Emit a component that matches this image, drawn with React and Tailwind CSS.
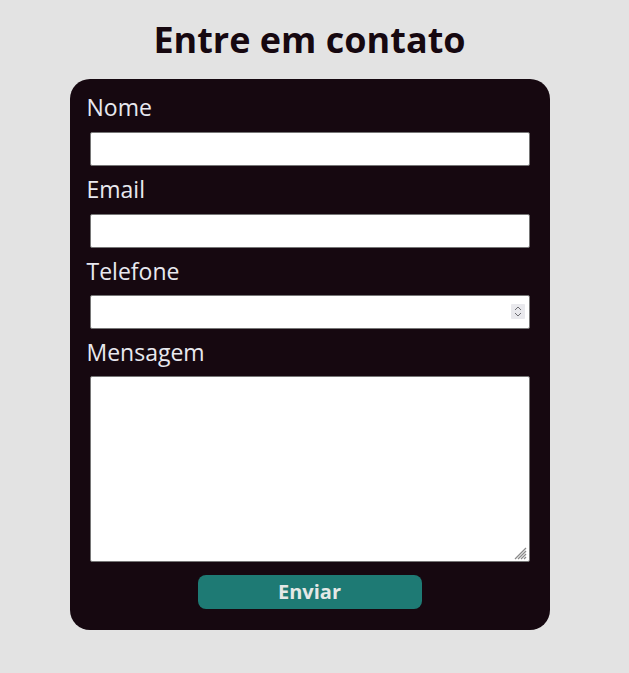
export default function App() {
  const label = "block text-[23px] leading-[26px] pt-[3px] text-[#e8e8ef]";
  const input = "block ml-[3px] w-[440px] h-[34px] bg-white border border-[#767676] rounded-[2px] px-1 text-black";
  return (
    <div className="min-h-[673px] bg-[#e3e3e3] flex flex-col items-center pt-[16px] pr-[10px]" style={{ fontFamily: '"Open Sans", sans-serif' }}>
      <h1 className="text-[36px] leading-[48px] font-bold text-[#160810]">Entre em contato</h1>
      <form className="mt-[15px] w-[480px] bg-[#160810] rounded-[20px] px-[17px] pt-[12px] pb-[21px] flex flex-col">
        <label className={label}>Nome</label>
        <input type="text" className={`${input} mt-[12px]`} />
        <label className={`${label} mt-[7px]`}>Email</label>
        <input type="email" className={`${input} mt-[12px]`} />
        <label className={`${label} mt-[7px]`}>Telefone</label>
        <div className="relative mt-[11px]">
          <input type="text" inputMode="numeric" className={input} />
          <div className="absolute left-[424px] top-[9px] w-[14px] h-[15px] bg-[#e9e9ed] rounded-[1px] flex items-center justify-center">
            <svg width="8" height="11" viewBox="0 0 8 11" fill="none" stroke="#6d6d72" strokeWidth="1">
              <path d="M1 4 L4 1 L7 4" />
              <path d="M1 7 L4 10 L7 7" />
            </svg>
          </div>
        </div>
        <label className={`${label} mt-[7px]`}>Mensagem</label>
        <div className="relative mt-[11px]">
          <textarea className="block ml-[3px] w-[440px] h-[186px] bg-white border border-[#767676] rounded-[2px] resize-none" />
          <svg className="absolute left-[426px] top-[170px]" width="14" height="14" viewBox="0 0 14 14" stroke="#8a8a8a" strokeWidth="1.2">
            <path d="M2 13 L13 2" />
            <path d="M5 13 L13 5" />
            <path d="M8 13 L13 8" />
            <path d="M11 13 L13 11" />
          </svg>
        </div>
        <button type="button" className="self-center mt-[13px] w-[224px] h-[34px] rounded-[8px] bg-[#1e7a74] text-[#e4e8e6] font-bold text-[20px] leading-[34px]">Enviar</button>
      </form>
    </div>
  );
}
